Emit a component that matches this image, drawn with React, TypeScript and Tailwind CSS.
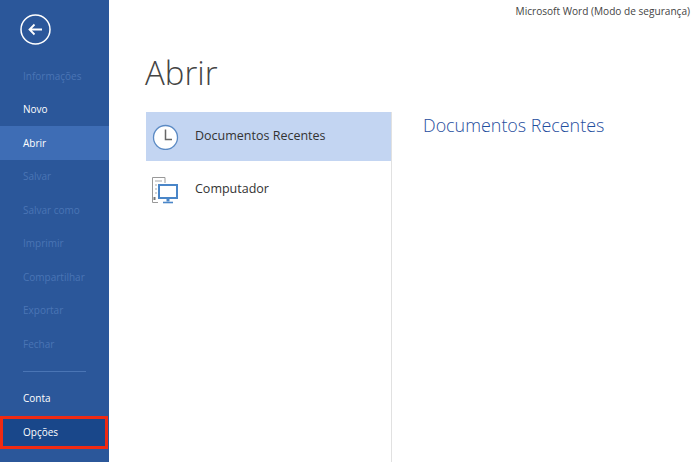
export default function App() {
  const font = { fontFamily: '"Open Sans", "Noto Sans", sans-serif' };
  const Item = ({ t, dim, cls = "" }: { t: string; dim?: boolean; cls?: string }) => (
    <div className={`h-[33.5px] shrink-0 pl-[23px] pt-[1px] flex items-center text-[10px] ${dim ? "text-[#4a75b5]" : "text-white"} ${cls}`}>{t}</div>
  );
  return (
    <div className="w-[695px] h-[462px] flex bg-white overflow-hidden" style={font}>
      <div className="w-[109px] h-full bg-[#2b579a] flex flex-col shrink-0">
        <div className="h-[59px] pt-[14px] pl-[20px] shrink-0">
          <svg width="31" height="31" viewBox="0 0 31 31" fill="none" stroke="white">
            <circle cx="15.5" cy="15.5" r="14.5" strokeWidth="1.5" />
            <path d="M22 15.5H9.5M14.5 10.5l-5 5 5 5" strokeWidth="1.8" />
          </svg>
        </div>
        <Item t="Informações" dim />
        <Item t="Novo" />
        <Item t="Abrir" cls="bg-[#3e6db5]" />
        <Item t="Salvar" dim />
        <Item t="Salvar como" dim />
        <Item t="Imprimir" dim />
        <Item t="Compartilhar" dim />
        <Item t="Exportar" dim />
        <Item t="Fechar" dim />
        <div className="h-[20px] pt-[10px] pl-[23px] shrink-0">
          <div className="w-[63px] h-px bg-[#4a75b5]" />
        </div>
        <div className="h-[35px] shrink-0 pl-[23px] flex items-center text-[10px] text-white">Conta</div>
        <div className="h-[33px] shrink-0 w-[108px] pl-[20px] flex items-center text-[10px] text-white bg-[#19478a] border-[3px] border-[#f02a12] box-border">Opções</div>
      </div>
      <div className="flex-1 flex flex-col min-w-0">
        <div className="h-[24px] pr-[5px] flex items-center justify-end text-[10.1px] text-[#444444]">Microsoft Word (Modo de segurança)</div>
        <h1 className="pl-[36px] mt-[21px] h-[67px] text-[33px] leading-[56px] font-light text-[#444444]">Abrir</h1>
        <div className="flex flex-1 pl-[37px]">
          <div className="w-[246px] border-r border-[#e1e1e1] shrink-0">
            <div className="h-[49px] bg-[#c3d5f2] flex items-center text-[#333333] text-[12.5px]">
              <svg className="ml-[6px] w-[27px] h-[27px]" viewBox="0 0 27 27" fill="none">
                <circle cx="13.5" cy="14.5" r="12" fill="white" stroke="#5b8ac4" strokeWidth="1.3" />
                <path d="M13.5 6.5v10h6.5" stroke="#666" strokeWidth="1.5" />
              </svg>
              <span className="ml-[16px]">Documentos Recentes</span>
            </div>
            <div className="h-[56px] pt-[1px] flex items-center text-[#333333] text-[12.5px]">
              <svg className="ml-[6px] w-[26px] h-[28px]" viewBox="0 0 26 28" fill="none">
                <path d="M0.5 1.5H13V7M0.5 1.5V26.5H6" stroke="#999" strokeWidth="1" />
                <path d="M3 5h7M3 9h2M3 13h2M3 17h2" stroke="#aaa" strokeWidth="1.2" />
                <path d="M2.5 21v3" stroke="#777" strokeWidth="2" />
                <rect x="7" y="9" width="18" height="13" fill="white" stroke="#4a86c8" strokeWidth="2" />
                <path d="M16 22.5v3" stroke="#4a86c8" strokeWidth="3" />
                <path d="M11 26.5h10" stroke="#4a86c8" strokeWidth="1.6" />
              </svg>
              <span className="ml-[17px]">Computador</span>
            </div>
          </div>
          <div className="pl-[31px] text-[17.9px] leading-[26px] font-light text-[#1f4e9e]">Documentos Recentes</div>
        </div>
      </div>
    </div>
  );
}
